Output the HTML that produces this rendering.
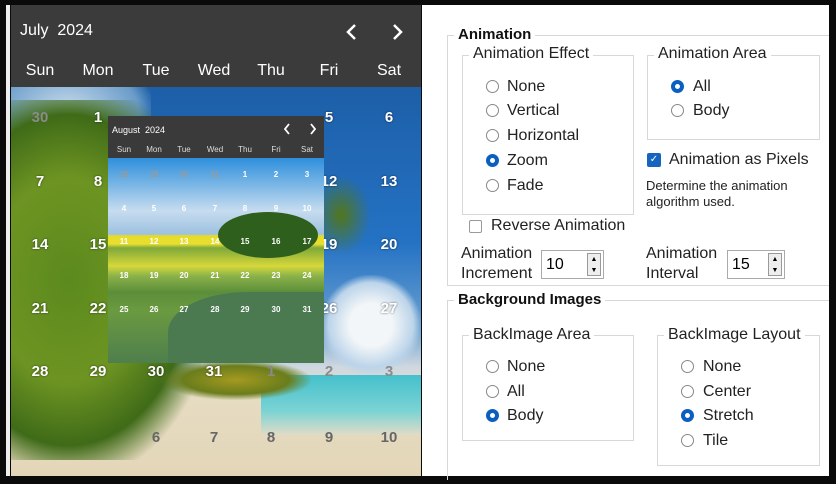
<!DOCTYPE html>
<html><head><meta charset="utf-8"><style>
*{margin:0;padding:0;box-sizing:border-box}
body{width:836px;height:484px;background:#0a0a0a;position:relative;overflow:hidden;font-family:"Liberation Sans",sans-serif}
.a{position:absolute}
.cal{left:11px;top:5px;width:410px;height:471px;overflow:hidden}
.hdr{left:0;top:0;width:410px;height:82px;background:#3b3b3b}
.n{position:absolute;transform:translateX(-50%);font-weight:bold;font-size:15px;color:#fff;text-shadow:0 0 2px rgba(0,0,0,.6)}
.g{color:#8a8a8a;text-shadow:none}
.dn{position:absolute;transform:translateX(-50%);color:#fff;font-size:16px;top:57px}
.sn{position:absolute;transform:translateX(-50%);font-weight:bold;font-size:8px;color:#fff}
.sd{position:absolute;transform:translateX(-50%);color:#ddd;font-size:8px;top:29px}
.p{background:#fff;left:422px;top:5px;width:407px;height:471px}
.t{position:absolute;font-size:16px;color:#222;white-space:nowrap}
.b{font-weight:bold;color:#111;font-size:15px}
.box{position:absolute;border:1px solid #d8d8d8}
.r{position:absolute;width:13px;height:13px;border:1px solid #888;border-radius:50%;background:#fff}
.r.on{border:4px solid #0a5fbf}
.spin{position:absolute;border:1px solid #aaa;height:29px;background:#fff}
.spin span{position:absolute;left:4px;top:5px;font-size:16px}
.sb{position:absolute;right:2px;top:2px;width:14px;height:23px;border:1px solid #999;background:#eee;font-size:7px;line-height:11px;text-align:center}
</style></head><body>
<div style="position:absolute;left:6px;top:5px;width:4px;height:471px;background:#eee"></div>
<div class="a cal">
 <div class="a" style="left:0;top:82px;width:410px;height:389px;background:linear-gradient(180deg,#1d5fa8 0%,#2472c4 40%,#6ba0d0 62%,#cfd8e0 72%,#e6dcc2 80%,#e3d6b8 100%)"></div>
 <div class="a" style="left:0;top:82px;width:140px;height:80px;background:radial-gradient(ellipse at 40% 30%,#c8dced,#6b9cc9 60%,transparent 75%)"></div>
 <div class="a" style="left:250px;top:370px;width:160px;height:60px;background:linear-gradient(180deg,#44c0cc,#7bd3d4 60%,#e0dcc8)"></div>
 <div class="a" style="left:310px;top:270px;width:100px;height:100px;background:radial-gradient(ellipse,#f3f6f8 30%,#bcd4ea 60%,transparent 72%)"></div>
 <div class="a" style="left:0;top:95px;width:190px;height:360px;background:radial-gradient(ellipse at 30% 50%,#5c8a1e 0%,#6d9422 40%,#3f6b18 65%,transparent 80%)"></div>
 <div class="a" style="left:150px;top:355px;width:150px;height:40px;background:radial-gradient(ellipse,#a59a20,#6a7d1c 50%,transparent 72%)"></div>
 <div class="a" style="left:300px;top:170px;width:60px;height:80px;background:radial-gradient(ellipse,#52761b,transparent 70%)"></div>
 <div class="a hdr"></div>
 <div class="a" style="left:9px;top:17px;color:#fff;font-size:16px">July&nbsp; 2024</div>
 <svg class="a" style="left:332px;top:17px" width="70" height="20"><path d="M12 3L5 10L12 17" stroke="#fff" stroke-width="2.5" fill="none"/><path d="M51 3L58 10L51 17" stroke="#fff" stroke-width="2.5" fill="none"/></svg>
 <div class="dn" style="left:29px">Sun</div><div class="dn" style="left:87px">Mon</div><div class="dn" style="left:145px">Tue</div><div class="dn" style="left:203px">Wed</div><div class="dn" style="left:260px">Thu</div><div class="dn" style="left:318px">Fri</div><div class="dn" style="left:378px">Sat</div>
 <div class="n g" style="left:29px;top:104px">30</div><div class="n" style="left:87px;top:104px">1</div><div class="n" style="left:318px;top:104px">5</div><div class="n" style="left:378px;top:104px">6</div>
 <div class="n" style="left:29px;top:168px">7</div><div class="n" style="left:87px;top:168px">8</div><div class="n" style="left:318px;top:168px">12</div><div class="n" style="left:378px;top:168px">13</div>
 <div class="n" style="left:29px;top:231px">14</div><div class="n" style="left:87px;top:231px">15</div><div class="n" style="left:318px;top:231px">19</div><div class="n" style="left:378px;top:231px">20</div>
 <div class="n" style="left:29px;top:295px">21</div><div class="n" style="left:87px;top:295px">22</div><div class="n" style="left:318px;top:295px">26</div><div class="n" style="left:378px;top:295px">27</div>
 <div class="n" style="left:29px;top:358px">28</div><div class="n" style="left:87px;top:358px">29</div><div class="n" style="left:145px;top:358px">30</div><div class="n" style="left:203px;top:358px">31</div><div class="n g" style="left:260px;top:358px">1</div><div class="n g" style="left:318px;top:358px">2</div><div class="n g" style="left:378px;top:358px">3</div>
 <div class="n g" style="left:145px;top:424px;color:#666">6</div><div class="n g" style="left:203px;top:424px;color:#666">7</div><div class="n g" style="left:260px;top:424px;color:#666">8</div><div class="n g" style="left:318px;top:424px;color:#666">9</div><div class="n g" style="left:378px;top:424px;color:#666">10</div>
</div>
<div class="a" style="left:108px;top:116px;width:216px;height:247px;overflow:hidden">
 <div class="a" style="left:0;top:0;width:216px;height:247px;background:linear-gradient(180deg,#3a3a3a 0,#3a3a3a 42px,#2f8fdc 42px,#7db8e6 70px,#c7dcef 95px,#9dc1e0 118px,#e5dc2a 120px,#e8df30 128px,#7fa83a 132px,#d6d83a 150px,#8bb24a 160px,#5c8e3a 176px,#6a9a40 195px,#4f7f4c 247px)"></div>
 <div class="a" style="left:110px;top:96px;width:100px;height:46px;border-radius:50%;background:#2f5f1c"></div>
 <div class="a" style="left:60px;top:176px;width:160px;height:80px;border-radius:50% 0 0 0;background:#4b7a50"></div>
 <div class="a" style="left:4px;top:9px;color:#fff;font-size:9px">August&nbsp; 2024</div>
 <svg class="a" style="left:172px;top:6px" width="40" height="14"><path d="M9 2L5 7L9 12" stroke="#fff" stroke-width="1.8" fill="none"/><path d="M31 2L35 7L31 12" stroke="#fff" stroke-width="1.8" fill="none"/></svg>
 <div class="sd" style="left:16px">Sun</div><div class="sd" style="left:46px">Mon</div><div class="sd" style="left:76px">Tue</div><div class="sd" style="left:107px">Wed</div><div class="sd" style="left:137px">Thu</div><div class="sd" style="left:168px">Fri</div><div class="sd" style="left:199px">Sat</div>
 <div class="sn g" style="left:16px;top:54px;color:#999">28</div><div class="sn g" style="left:46px;top:54px;color:#999">29</div><div class="sn g" style="left:76px;top:54px;color:#999">30</div><div class="sn g" style="left:107px;top:54px;color:#999">31</div><div class="sn" style="left:137px;top:54px">1</div><div class="sn" style="left:168px;top:54px">2</div><div class="sn" style="left:199px;top:54px">3</div>
 <div class="sn" style="left:16px;top:88px">4</div><div class="sn" style="left:46px;top:88px">5</div><div class="sn" style="left:76px;top:88px">6</div><div class="sn" style="left:107px;top:88px">7</div><div class="sn" style="left:137px;top:88px">8</div><div class="sn" style="left:168px;top:88px">9</div><div class="sn" style="left:199px;top:88px">10</div>
 <div class="sn" style="left:16px;top:121px">11</div><div class="sn" style="left:46px;top:121px">12</div><div class="sn" style="left:76px;top:121px">13</div><div class="sn" style="left:107px;top:121px">14</div><div class="sn" style="left:137px;top:121px">15</div><div class="sn" style="left:168px;top:121px">16</div><div class="sn" style="left:199px;top:121px">17</div>
 <div class="sn" style="left:16px;top:155px">18</div><div class="sn" style="left:46px;top:155px">19</div><div class="sn" style="left:76px;top:155px">20</div><div class="sn" style="left:107px;top:155px">21</div><div class="sn" style="left:137px;top:155px">22</div><div class="sn" style="left:168px;top:155px">23</div><div class="sn" style="left:199px;top:155px">24</div>
 <div class="sn" style="left:16px;top:189px">25</div><div class="sn" style="left:46px;top:189px">26</div><div class="sn" style="left:76px;top:189px">27</div><div class="sn" style="left:107px;top:189px">28</div><div class="sn" style="left:137px;top:189px">29</div><div class="sn" style="left:168px;top:189px">30</div><div class="sn" style="left:199px;top:189px">31</div>
</div>
<div class="a p"></div>
<div class="box" style="left:447px;top:35px;width:382px;height:251px;border-right:none"></div>
<div class="t b" style="left:454px;top:26px;background:#fff;padding:0 4px">Animation</div>
<div class="box" style="left:462px;top:55px;width:172px;height:160px"></div>
<div class="t" style="left:469px;top:45px;background:#fff;padding:0 4px">Animation Effect</div>
<div class="r" style="left:486px;top:80px"></div><div class="t" style="left:507px;top:78px">None</div>
<div class="r" style="left:486px;top:104px"></div><div class="t" style="left:507px;top:102px">Vertical</div>
<div class="r" style="left:486px;top:129px"></div><div class="t" style="left:507px;top:127px">Horizontal</div>
<div class="r on" style="left:486px;top:154px"></div><div class="t" style="left:507px;top:152px">Zoom</div>
<div class="r" style="left:486px;top:179px"></div><div class="t" style="left:507px;top:177px">Fade</div>
<div class="box" style="left:647px;top:55px;width:173px;height:85px"></div>
<div class="t" style="left:654px;top:45px;background:#fff;padding:0 4px">Animation Area</div>
<div class="r on" style="left:671px;top:80px"></div><div class="t" style="left:693px;top:78px">All</div>
<div class="r" style="left:671px;top:104px"></div><div class="t" style="left:693px;top:102px">Body</div>
<div class="a" style="left:647px;top:153px;width:14px;height:14px;background:#1565c0;border-radius:2px;color:#fff;font-size:10px;text-align:center;line-height:14px">✓</div>
<div class="t" style="left:669px;top:151px">Animation as Pixels</div>
<div class="t" style="left:646px;top:178px;font-size:13px;line-height:16px">Determine the animation<br>algorithm used.</div>
<div class="a" style="left:469px;top:220px;width:13px;height:13px;border:1px solid #999;border-radius:2px"></div>
<div class="t" style="left:491px;top:217px">Reverse Animation</div>
<div class="t" style="left:461px;top:244px;line-height:20px">Animation<br>Increment</div>
<div class="spin" style="left:541px;top:250px;width:63px"><span>10</span><div class="sb">▲<br>▼</div></div>
<div class="t" style="left:646px;top:244px;line-height:20px">Animation<br>Interval</div>
<div class="spin" style="left:727px;top:250px;width:58px"><span>15</span><div class="sb">▲<br>▼</div></div>
<div class="box" style="left:447px;top:300px;width:382px;height:180px;border-right:none;border-bottom:none"></div>
<div class="t b" style="left:454px;top:291px;background:#fff;padding:0 4px">Background Images</div>
<div class="box" style="left:462px;top:335px;width:172px;height:106px"></div>
<div class="t" style="left:469px;top:326px;background:#fff;padding:0 4px">BackImage Area</div>
<div class="r" style="left:486px;top:360px"></div><div class="t" style="left:507px;top:358px">None</div>
<div class="r" style="left:486px;top:385px"></div><div class="t" style="left:507px;top:383px">All</div>
<div class="r on" style="left:486px;top:409px"></div><div class="t" style="left:507px;top:407px">Body</div>
<div class="box" style="left:657px;top:335px;width:163px;height:131px"></div>
<div class="t" style="left:664px;top:326px;background:#fff;padding:0 4px">BackImage Layout</div>
<div class="r" style="left:681px;top:360px"></div><div class="t" style="left:703px;top:358px">None</div>
<div class="r" style="left:681px;top:385px"></div><div class="t" style="left:703px;top:383px">Center</div>
<div class="r on" style="left:681px;top:409px"></div><div class="t" style="left:703px;top:407px">Stretch</div>
<div class="r" style="left:681px;top:434px"></div><div class="t" style="left:703px;top:432px">Tile</div>
</body></html>
